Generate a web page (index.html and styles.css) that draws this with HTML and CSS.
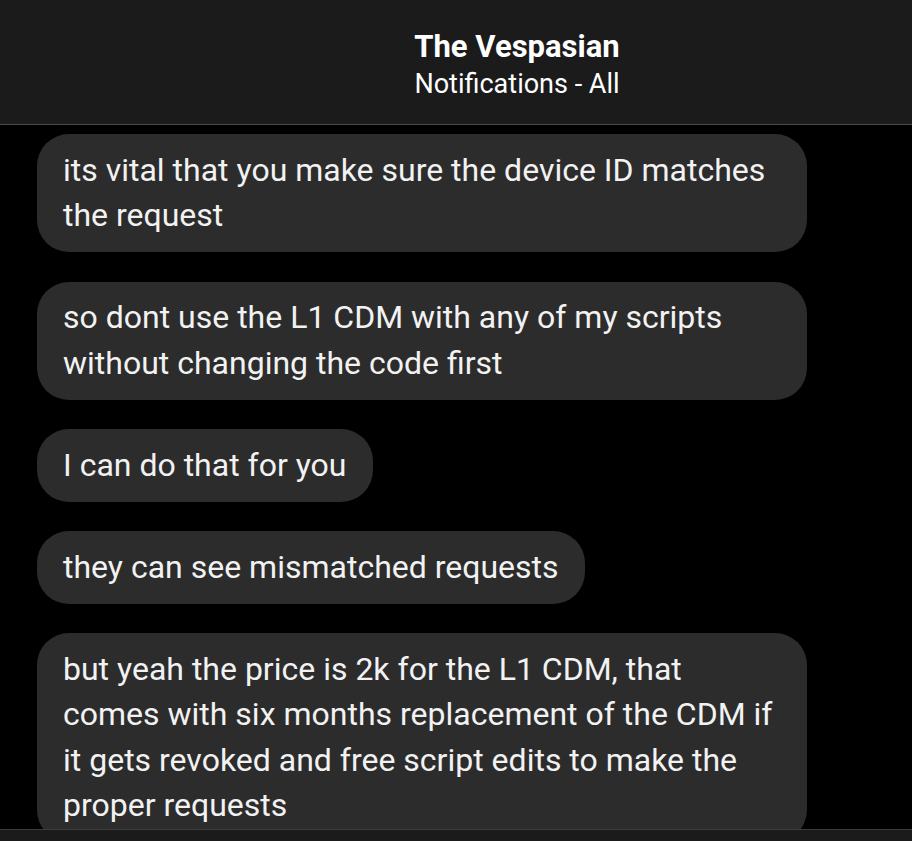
FILE: index.html
```html
<!DOCTYPE html>
<html lang="en">
<head>
    <meta charset="UTF-8">
    <meta name="viewport" content="width=device-width, initial-scale=1.0">
    <title>The Vespasian</title>
    <link rel="stylesheet" href="styles.css">
</head>
<body>
    <header class="header">
        <div class="header-title">The Vespasian</div>
        <div class="header-sub">Notifications - All</div>
    </header>

    <main class="feed">
        <div class="bubble">its vital that you make sure the device ID matches the request</div>
        <div class="bubble">so dont use the L1 CDM with any of my scripts without changing the code first</div>
        <div class="bubble">I can do that for you</div>
        <div class="bubble">they can see mismatched requests</div>
        <div class="bubble">but yeah the price is 2k for the L1 CDM, that comes with six months replacement of the CDM if it gets revoked and free script edits to make the proper requests</div>
    </main>

    <footer class="footer"></footer>
</body>
</html>
```

FILE: styles.css
```css
body {
    margin: 0;
    height: 100vh;
    display: flex;
    flex-direction: column;
    background: #000;
    color: #f2f2f2;
    font-family: Roboto, 'Noto Sans', Arial, sans-serif;
    overflow: hidden;
}

.header {
    flex: none;
    height: 125px;
    box-sizing: border-box;
    padding: 28px 0 0 122px;
    background: #1b1b1b;
    border-bottom: 1px solid #4a4a4a;
    text-align: center;
    color: #fff;
}

.header-title {
    font-size: 31px;
    font-weight: bold;
    line-height: 38px;
}

.header-sub {
    font-size: 27px;
    line-height: 36px;
}

.feed {
    flex: 1;
    min-height: 0;
    overflow: hidden;
    padding: 9px 37px 0;
    display: flex;
    flex-direction: column;
    align-items: flex-start;
    gap: 29.5px;
}

.bubble {
    flex: none;
    max-width: 718px;
    padding: 13.5px 26px;
    background: #2c2c2c;
    border-radius: 32px;
    font-size: 32px;
    line-height: 45.5px;
}

.footer {
    flex: none;
    height: 11px;
    background: #1b1b1b;
    border-top: 1px solid #3c3c3c;
}
```
